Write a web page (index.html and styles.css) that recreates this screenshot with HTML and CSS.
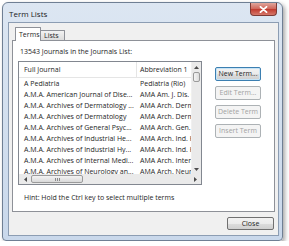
FILE: index.html
```html
<!DOCTYPE html>
<html>
<head>
<meta charset="utf-8">
<link rel="stylesheet" href="styles.css">
</head>
<body>
<div class="window">
  <div class="titlebar">
    <span class="title">Term Lists</span>
    <div class="close-x"><svg width="9" height="7" viewBox="0 0 9 7"><path d="M1.5 0.8 L7.5 6.2 M7.5 0.8 L1.5 6.2" stroke="#fff" stroke-width="1.8" stroke-linecap="round"/></svg></div>
  </div>
  <div class="client">
    <div class="tabs">
      <div class="tab active">Terms</div>
      <div class="tab">Lists</div>
    </div>
    <div class="panel">
      <div class="count">13543 Journals in the Journals List:</div>
      <div class="listarea">
        <div class="listbox">
          <div class="lb-main">
            <div class="lb-content">
              <div class="lb-header">
                <div class="c1 hcell">Full Journal</div>
                <div class="c2 hcell">Abbreviation 1</div>
              </div>
              <div class="lb-rows">
                <div class="row"><div class="c1">A Pediatria</div><div class="c2">Pediatria (Rio)</div></div>
                <div class="row"><div class="c1">A.M.A. American Journal of Dise...</div><div class="c2">AMA Am. J. Dis. Child.</div></div>
                <div class="row"><div class="c1">A.M.A. Archives of Dermatology ...</div><div class="c2">AMA Arch. Dermatol.</div></div>
                <div class="row"><div class="c1">A.M.A. Archives of Dermatology</div><div class="c2">AMA Arch. Dermatol.</div></div>
                <div class="row"><div class="c1">A.M.A. Archives of General Psyc...</div><div class="c2">AMA Arch. Gen. Psychiatry</div></div>
                <div class="row"><div class="c1">A.M.A. Archives of Industrial He...</div><div class="c2">AMA Arch. Ind. Health</div></div>
                <div class="row"><div class="c1">A.M.A. Archives of Industrial Hy...</div><div class="c2">AMA Arch. Ind. Hyg.</div></div>
                <div class="row"><div class="c1">A.M.A. Archives of Internal Medi...</div><div class="c2">AMA Arch. Intern. Med.</div></div>
                <div class="row"><div class="c1">A.M.A. Archives of Neurology an...</div><div class="c2">AMA Arch. Neurol.</div></div>
              </div>
            </div>
            <div class="vscroll">
              <div class="arrow"><svg width="5" height="3" viewBox="0 0 5 3"><path d="M0 3 L2.5 0 L5 3 Z" fill="#4d4d4d"/></svg></div>
              <div class="vthumb"></div>
              <div class="vtrack"></div>
              <div class="arrow"><svg width="5" height="3" viewBox="0 0 5 3"><path d="M0 0 L2.5 3 L5 0 Z" fill="#4d4d4d"/></svg></div>
            </div>
          </div>
          <div class="hscroll">
            <div class="harrow"><svg width="3" height="5" viewBox="0 0 3 5"><path d="M3 0 L0 2.5 L3 5 Z" fill="#4d4d4d"/></svg></div>
            <div class="hthumb"><span class="grip"></span></div>
            <div class="htrack"></div>
            <div class="harrow"><svg width="3" height="5" viewBox="0 0 3 5"><path d="M0 0 L3 2.5 L0 5 Z" fill="#4d4d4d"/></svg></div>
          </div>
        </div>
        <div class="buttons">
          <div class="btn default">New Term...</div>
          <div class="btn disabled">Edit Term...</div>
          <div class="btn disabled">Delete Term</div>
          <div class="btn disabled">Insert Term</div>
        </div>
      </div>
      <div class="hint">Hint: Hold the Ctrl key to select multiple terms</div>
    </div>
    <div class="footer">
      <div class="btn close">Close</div>
    </div>
  </div>
</div>
</body>
</html>
```
FILE: styles.css
```css
html, body {
  margin: 0;
  padding: 0;
  background: #ffffff;
}
body {
  padding: 2px 0 0 2px;
  font-family: "Open Sans", "Noto Sans", sans-serif;
  font-size: 7px;
  color: #1e1e1e;
}
.window {
  box-sizing: border-box;
  width: 281px;
  height: 239px;
  border: 1px solid #6f7f94;
  border-radius: 6px 6px 4px 4px;
  background: linear-gradient(#dce6f2, #c9d8eb);
  padding: 0 3px 4px 5px;
  display: flex;
  flex-direction: column;
  box-shadow: 2px 2px 4px rgba(0, 0, 0, 0.35);
}
.titlebar {
  height: 19px;
  display: flex;
  align-items: flex-start;
  justify-content: space-between;
  flex-shrink: 0;
}
.title {
  font-size: 8px;
  color: #1a1a1a;
  margin-top: 5px;
  margin-left: 1px;
}
.close-x {
  width: 27px;
  height: 13px;
  margin-right: 2px;
  border: 1px solid #7d3a35;
  border-top: none;
  border-radius: 0 0 4px 4px;
  background: linear-gradient(#e0a69c, #cf6458 50%, #c0392d 51%, #d5786b);
  display: flex;
  align-items: center;
  justify-content: center;
  box-sizing: border-box;
}
.close-x svg { display: block; }
.client {
  flex: 1;
  background: #f0f0f0;
  border: 1px solid #8c9db3;
  display: flex;
  flex-direction: column;
}
.tabs {
  display: flex;
  align-items: flex-end;
  padding: 4px 0 0 6px;
  height: 13px;
  position: relative;
  z-index: 1;
}
.tab {
  box-sizing: border-box;
  height: 10px;
  padding: 0 5px;
  border: 1px solid #8e9198;
  border-bottom: none;
  background: linear-gradient(#f2f2f2, #dcdcdc);
  font-size: 7px;
  line-height: 9px;
  border-radius: 1px 1px 0 0;
}
.tab.active {
  height: 14px;
  margin-bottom: -1px;
  background: #ffffff;
  width: 26px;
  line-height: 13px;
  padding: 0 0 0 3px;
}
.tab + .tab {
  margin-left: -1px;
  width: 25px;
  padding: 0 0 0 3px;
}
.panel {
  height: 172px;
  box-sizing: border-box;
  margin: 0 3px 0 3px;
  background: #ffffff;
  border: 1px solid #8e9198;
  display: flex;
  flex-direction: column;
}
.count {
  margin: 6px 0 0 7px;
  height: 10px;
  line-height: 10px;
}
.listarea {
  display: flex;
  margin-top: 4px;
  margin-left: 5px;
}
.listbox {
  box-sizing: border-box;
  width: 184px;
  height: 124px;
  border: 1px solid #828790;
  display: flex;
  flex-direction: column;
  overflow: hidden;
}
.lb-main {
  display: flex;
  flex: 1;
  min-height: 0;
}
.lb-content {
  flex: 1;
  overflow: hidden;
  display: flex;
  flex-direction: column;
}
.lb-header {
  display: flex;
  height: 16px;
  flex-shrink: 0;
  border-bottom: 1px solid #e5e5e5;
  box-sizing: border-box;
}
.hcell {
  line-height: 15px;
}
.lb-header .c1 {
  border-right: 1px solid #e5e5e5;
}
.c1 {
  width: 118px;
  box-sizing: border-box;
  padding-left: 5px;
  white-space: nowrap;
  overflow: hidden;
  flex-shrink: 0;
}
.c2 {
  padding-left: 3px;
  white-space: nowrap;
  overflow: hidden;
  flex: 1;
}
.lb-rows {
  flex: 1;
  overflow: hidden;
}
.row {
  display: flex;
  height: 11px;
  line-height: 11px;
}
.vscroll {
  width: 10px;
  flex-shrink: 0;
  background: #eaeaea;
  border-left: 1px solid #f0f0f0;
  display: flex;
  flex-direction: column;
  box-sizing: border-box;
}
.arrow {
  height: 10px;
  display: flex;
  align-items: center;
  justify-content: center;
}
.arrow svg, .harrow svg { display: block; }
.vthumb {
  height: 10px;
  margin: 0 1px;
  border: 1px solid #9a9a9a;
  border-radius: 2px;
  background: linear-gradient(90deg, #f4f4f4, #dcdcdc);
  box-sizing: border-box;
}
.vtrack { flex: 1; }
.hscroll {
  height: 10px;
  flex-shrink: 0;
  background: #eaeaea;
  display: flex;
  align-items: stretch;
}
.harrow {
  width: 12px;
  display: flex;
  align-items: center;
  justify-content: center;
}
.hthumb {
  width: 52px;
  margin: 1px 0;
  border: 1px solid #9a9a9a;
  border-radius: 2px;
  background: linear-gradient(#f4f4f4, #d9d9d9);
  box-sizing: border-box;
  display: flex;
  align-items: center;
  justify-content: center;
}
.grip {
  width: 5px;
  height: 3px;
  background: repeating-linear-gradient(90deg, #8a8a8a 0 1px, transparent 1px 2px);
}
.htrack { flex: 1; }
.buttons {
  display: flex;
  flex-direction: column;
  gap: 5px;
  margin-left: 13px;
  margin-top: 6px;
}
.btn {
  box-sizing: border-box;
  width: 46px;
  height: 14px;
  border: 1px solid #707070;
  border-radius: 2px;
  background: linear-gradient(#f2f2f2, #ebebeb 50%, #dddddd 51%, #cfcfcf);
  text-align: center;
  line-height: 12px;
  font-size: 7px;
  color: #1e1e1e;
  white-space: nowrap;
}
.btn.default {
  border-color: #3c7fb1;
  box-shadow: inset 0 0 0 1px #c6e4f7;
}
.btn.disabled {
  border-color: #adb2b5;
  background: #f4f4f4;
  color: #a3a3a3;
}
.hint {
  margin: 8px 0 0 11px;
  line-height: 10px;
}
.footer {
  display: flex;
  justify-content: flex-end;
  padding: 5px 4px 0 0;
}
.btn.close {
  width: 47px;
  height: 13px;
}
```
